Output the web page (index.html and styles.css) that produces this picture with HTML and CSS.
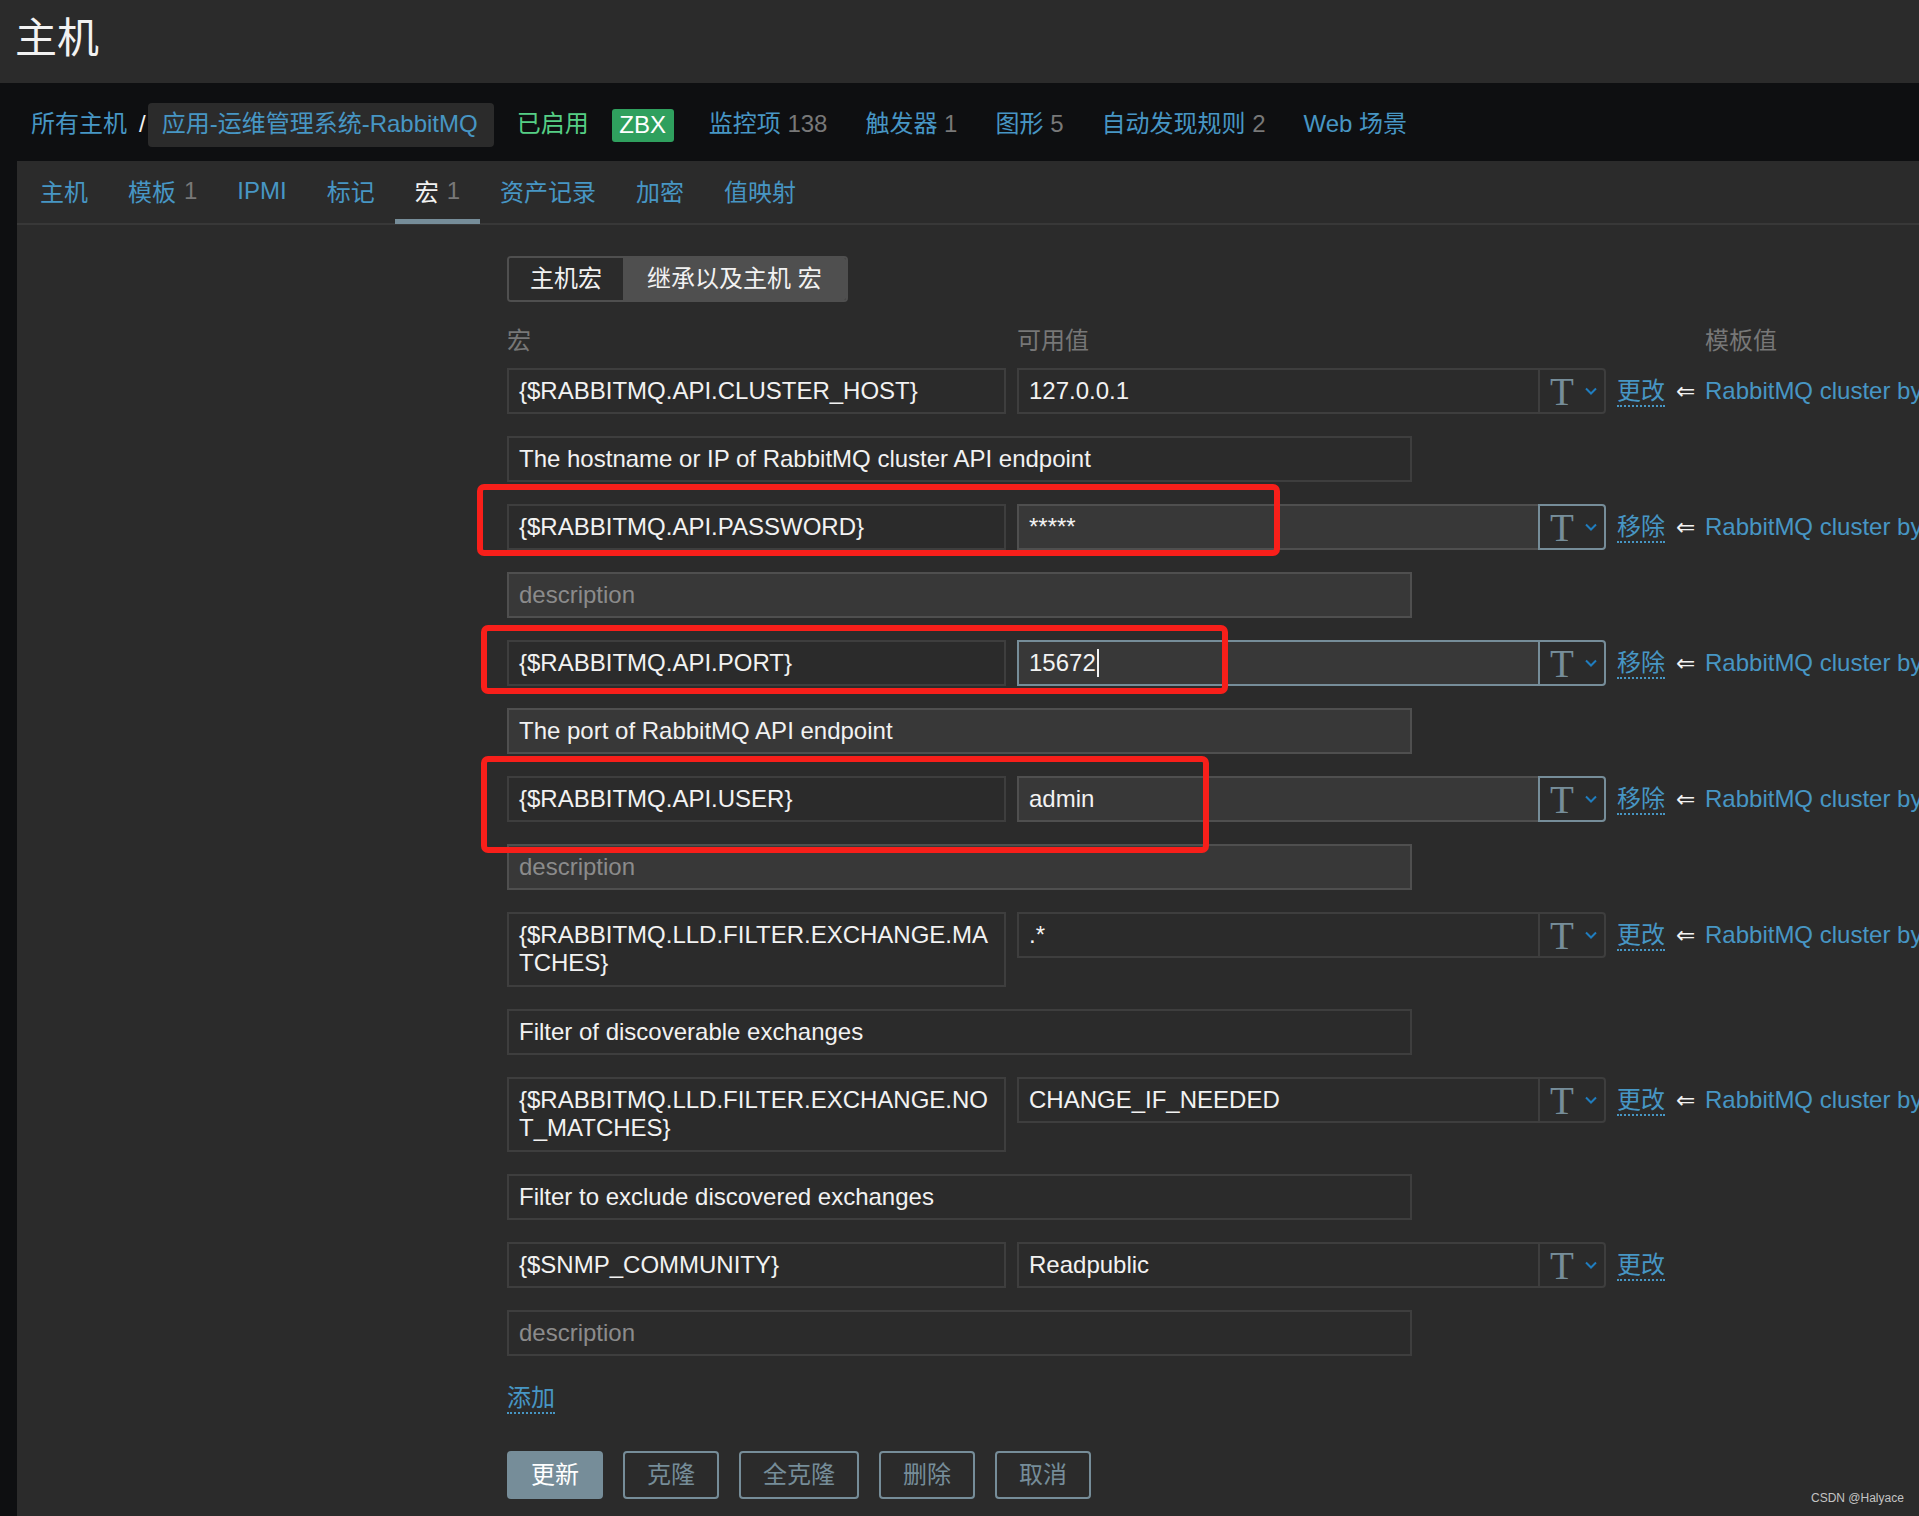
FILE: index.html
```html
<!DOCTYPE html>
<html lang="zh-CN">
<head>
<meta charset="utf-8">
<title>主机</title>
<link rel="stylesheet" href="styles.css">
</head>
<body>
<div class="page">
  <header class="page-header"><h1>主机</h1></header>

  <nav class="host-nav">
    <a class="link nav-text">所有主机</a>
    <span class="sep nav-text">/</span>
    <span class="crumb"><a class="link">应用-运维管理系统-RabbitMQ</a></span>
    <span class="status nav-text">已启用</span>
    <span class="badge">ZBX</span>
    <a class="link item first nav-text">监控项 <span class="count">138</span></a>
    <a class="link item nav-text">触发器 <span class="count">1</span></a>
    <a class="link item nav-text">图形 <span class="count">5</span></a>
    <a class="link item nav-text">自动发现规则 <span class="count">2</span></a>
    <a class="link item nav-text">Web 场景</a>
  </nav>

  <div class="main">
    <ul class="tabs">
      <li class="tab">主机</li>
      <li class="tab">模板 <span class="count">1</span></li>
      <li class="tab">IPMI</li>
      <li class="tab">标记</li>
      <li class="tab active">宏 <span class="count">1</span></li>
      <li class="tab">资产记录</li>
      <li class="tab">加密</li>
      <li class="tab">值映射</li>
    </ul>

    <form class="macros">
      <div class="radio">
        <span class="radio-opt">主机宏</span>
        <span class="radio-opt selected">继承以及主机 宏</span>
      </div>

      <div class="col-heads">
        <span>宏</span>
        <span>可用值</span>
        <span></span>
        <span></span>
        <span>模板值</span>
      </div>

      <div class="entry">
        <div class="macro-line">
          <div class="field ro">{$RABBITMQ.API.CLUSTER_HOST}</div>
          <div class="value-group">
            <div class="field ro value">127.0.0.1</div>
            <div class="type-btn"><span class="t">T</span><svg width="12" height="8" viewBox="0 0 12 8"><path d="M1 1.5 L6 6.5 L11 1.5" fill="none" stroke="#1f7dbf" stroke-width="2"/></svg></div>
          </div>
          <a class="act">更改</a>
          <span class="arrow">⇐</span>
          <a class="tpl">RabbitMQ cluster by HTTP</a>
        </div>
        <div class="field ro desc">The hostname or IP of RabbitMQ cluster API endpoint</div>
      </div>

      <div class="entry">
        <div class="macro-line">
          <div class="field ro">{$RABBITMQ.API.PASSWORD}</div>
          <div class="value-group">
            <div class="field ed value">*****</div>
            <div class="type-btn hl"><span class="t">T</span><svg width="12" height="8" viewBox="0 0 12 8"><path d="M1 1.5 L6 6.5 L11 1.5" fill="none" stroke="#1f7dbf" stroke-width="2"/></svg></div>
          </div>
          <a class="act">移除</a>
          <span class="arrow">⇐</span>
          <a class="tpl">RabbitMQ cluster by HTTP</a>
        </div>
        <div class="field ed desc placeholder">description</div>
      </div>

      <div class="entry">
        <div class="macro-line">
          <div class="field ro">{$RABBITMQ.API.PORT}</div>
          <div class="value-group">
            <div class="field ed focus value">15672<span class="caret"></span></div>
            <div class="type-btn hl"><span class="t">T</span><svg width="12" height="8" viewBox="0 0 12 8"><path d="M1 1.5 L6 6.5 L11 1.5" fill="none" stroke="#1f7dbf" stroke-width="2"/></svg></div>
          </div>
          <a class="act">移除</a>
          <span class="arrow">⇐</span>
          <a class="tpl">RabbitMQ cluster by HTTP</a>
        </div>
        <div class="field ed desc">The port of RabbitMQ API endpoint</div>
      </div>

      <div class="entry">
        <div class="macro-line">
          <div class="field ro">{$RABBITMQ.API.USER}</div>
          <div class="value-group">
            <div class="field ed value">admin</div>
            <div class="type-btn hl"><span class="t">T</span><svg width="12" height="8" viewBox="0 0 12 8"><path d="M1 1.5 L6 6.5 L11 1.5" fill="none" stroke="#1f7dbf" stroke-width="2"/></svg></div>
          </div>
          <a class="act">移除</a>
          <span class="arrow">⇐</span>
          <a class="tpl">RabbitMQ cluster by HTTP</a>
        </div>
        <div class="field ed desc placeholder">description</div>
      </div>

      <div class="entry">
        <div class="macro-line">
          <div class="field ro wrap">{$RABBITMQ.LLD.FILTER.EXCHANGE.MATCHES}</div>
          <div class="value-group">
            <div class="field ro value">.*</div>
            <div class="type-btn"><span class="t">T</span><svg width="12" height="8" viewBox="0 0 12 8"><path d="M1 1.5 L6 6.5 L11 1.5" fill="none" stroke="#1f7dbf" stroke-width="2"/></svg></div>
          </div>
          <a class="act">更改</a>
          <span class="arrow">⇐</span>
          <a class="tpl">RabbitMQ cluster by HTTP</a>
        </div>
        <div class="field ro desc">Filter of discoverable exchanges</div>
      </div>

      <div class="entry">
        <div class="macro-line">
          <div class="field ro wrap">{$RABBITMQ.LLD.FILTER.EXCHANGE.NOT_MATCHES}</div>
          <div class="value-group">
            <div class="field ro value">CHANGE_IF_NEEDED</div>
            <div class="type-btn"><span class="t">T</span><svg width="12" height="8" viewBox="0 0 12 8"><path d="M1 1.5 L6 6.5 L11 1.5" fill="none" stroke="#1f7dbf" stroke-width="2"/></svg></div>
          </div>
          <a class="act">更改</a>
          <span class="arrow">⇐</span>
          <a class="tpl">RabbitMQ cluster by HTTP</a>
        </div>
        <div class="field ro desc">Filter to exclude discovered exchanges</div>
      </div>

      <div class="entry">
        <div class="macro-line">
          <div class="field ro">{$SNMP_COMMUNITY}</div>
          <div class="value-group">
            <div class="field ro value">Readpublic</div>
            <div class="type-btn"><span class="t">T</span><svg width="12" height="8" viewBox="0 0 12 8"><path d="M1 1.5 L6 6.5 L11 1.5" fill="none" stroke="#1f7dbf" stroke-width="2"/></svg></div>
          </div>
          <a class="act">更改</a>
        </div>
        <div class="field ro desc placeholder">description</div>
      </div>

      <a class="add-link">添加</a>

      <div class="buttons">
        <button type="button" class="btn primary">更新</button>
        <button type="button" class="btn">克隆</button>
        <button type="button" class="btn">全克隆</button>
        <button type="button" class="btn">删除</button>
        <button type="button" class="btn">取消</button>
      </div>
    </form>
  </div>

  <div class="mark mark-1"></div>
  <div class="mark mark-2"></div>
  <div class="mark mark-3"></div>
  <div class="watermark">CSDN @Halyace</div>
</div>
</body>
</html>
```

FILE: styles.css
```css
* {
  box-sizing: border-box;
}

html,
body {
  margin: 0;
  padding: 0;
  width: 1919px;
  height: 1516px;
  overflow: hidden;
  background: #0e0f11;
}

body {
  font-family: "Liberation Sans", "Noto Sans CJK SC", sans-serif;
  font-size: 24px;
  color: #f2f2f2;
}

.page {
  position: relative;
  width: 1919px;
  height: 1516px;
}

a {
  text-decoration: none;
  cursor: pointer;
}

.link {
  color: #4796c4;
}

.count {
  color: #787878;
}

/* header */
.page-header {
  height: 83px;
  background: #2b2b2b;
  display: flex;
  align-items: center;
  padding: 0 0 6px 15px;
}

.page-header h1 {
  margin: 0;
  font-size: 42px;
  font-weight: normal;
  line-height: 50px;
  color: #f2f2f2;
}

/* host navigation */
.host-nav {
  height: 78px;
  background: #0e0f11;
  display: flex;
  align-items: center;
  padding: 6px 0 0 31px;
  white-space: nowrap;
}

.nav-text {
  line-height: 28px;
  padding-bottom: 2px;
}

.sep {
  margin: 0 2px 0 12px;
  color: #f2f2f2;
}

.crumb {
  height: 44px;
  line-height: 42px;
  padding: 0 16px 2px 14px;
  background: #2b2b2b;
  border-radius: 4px;
}

.status {
  margin-left: 23px;
  color: #56cf85;
}

.badge {
  margin-left: 23px;
  width: 62px;
  height: 33px;
  line-height: 31px;
  padding-bottom: 2px;
  text-align: center;
  background: #2fa05e;
  color: #ffffff;
  border-radius: 3px;
}

.item {
  margin-left: 38px;
}

.item.first {
  margin-left: 35px;
}

/* main area */
.main {
  margin-left: 17px;
  background: #2b2b2b;
  height: 1355px;
}

.tabs {
  list-style: none;
  margin: 0;
  padding: 0 0 0 3px;
  height: 64px;
  display: flex;
  align-items: flex-start;
  border-bottom: 2px solid #383838;
}

.tab {
  height: 63px;
  padding: 0 20px 4px;
  display: flex;
  align-items: center;
  gap: 8px;
  color: #4796c4;
  white-space: nowrap;
}

.tab.active {
  color: #f2f2f2;
  box-shadow: inset 0 -5px 0 #768d99;
}

.tab.active .count {
  color: #787878;
}

/* macro form */
.macros {
  padding: 31px 0 0 490px;
}

.radio {
  display: inline-flex;
  height: 46px;
  border: 2px solid #4f4f4f;
  border-radius: 4px;
  overflow: hidden;
}

.radio-opt {
  line-height: 42px;
  padding: 0 21px;
  background: #2b2b2b;
  color: #f2f2f2;
}

.radio-opt.selected {
  background: #4f4f4f;
  padding: 0 24px;
}

.col-heads,
.macro-line {
  display: grid;
  grid-template-columns: 499px 589px 48px 18px 1fr;
  column-gap: 11px;
  align-items: start;
}

.col-heads {
  margin-top: 25px;
  margin-bottom: 13px;
  line-height: 28px;
  color: #777777;
}

.entry {
  margin-bottom: 22px;
}

.field {
  min-height: 46px;
  padding: 7px 10px;
  line-height: 28px;
  border: 2px solid #3e3e3e;
  background: #2b2b2b;
  color: #f2f2f2;
  white-space: nowrap;
  overflow: hidden;
}

.field.ed {
  background: #383838;
  border-color: #4f4f4f;
}

.field.focus {
  border-color: #768d99;
}

.field.wrap {
  white-space: normal;
  word-break: break-all;
  padding-bottom: 8px;
}

.placeholder {
  color: #8b8b8b;
}

.caret {
  display: inline-block;
  width: 2px;
  height: 28px;
  margin-left: 1px;
  vertical-align: top;
  background: #f2f2f2;
}

.desc {
  width: 905px;
  margin-top: 22px;
}

.value-group {
  display: flex;
  height: 46px;
}

.value-group .value {
  flex: 1;
  border-right: 0;
}

.type-btn {
  width: 68px;
  height: 46px;
  flex: none;
  display: flex;
  align-items: center;
  padding-left: 10px;
  border: 2px solid #3e3e3e;
  border-radius: 0 4px 4px 0;
  background: #2b2b2b;
}

.type-btn.hl {
  border-color: #768d99;
}

.type-btn .t {
  font-family: "Liberation Serif", serif;
  font-size: 39px;
  line-height: 1;
  color: #768d99;
}

.type-btn svg {
  margin-left: 11px;
  display: block;
}

.act,
.arrow,
.tpl {
  margin-top: 9px;
  line-height: 28px;
  white-space: nowrap;
}

.act {
  justify-self: start;
  color: #4796c4;
  border-bottom: 2px dotted #4796c4;
}

.arrow {
  font-family: "DejaVu Sans", sans-serif;
  font-size: 23px;
  color: #f2f2f2;
}

.tpl {
  color: #4796c4;
}

.add-link {
  display: inline-block;
  margin-top: 6px;
  line-height: 28px;
  color: #4796c4;
  border-bottom: 2px dotted #4796c4;
}

.buttons {
  display: flex;
  gap: 20px;
  margin-top: 37px;
}

.btn {
  height: 48px;
  padding: 0 22px;
  font-family: inherit;
  font-size: 24px;
  line-height: 44px;
  border: 2px solid #768d99;
  border-radius: 4px;
  background: transparent;
  color: #768d99;
}

.btn.primary {
  background: #768d99;
  color: #ffffff;
}

/* red annotation frames drawn over the screenshot */
.mark {
  position: absolute;
  border: 6px solid #f81f1a;
  border-radius: 7px;
}

.mark-1 {
  left: 477px;
  top: 484px;
  width: 803px;
  height: 72px;
}

.mark-2 {
  left: 481px;
  top: 625px;
  width: 747px;
  height: 69px;
}

.mark-3 {
  left: 481px;
  top: 756px;
  width: 728px;
  height: 97px;
}

.watermark {
  position: absolute;
  left: 1811px;
  top: 1491px;
  font-size: 12px;
  line-height: 14px;
  color: #c4c4c4;
}
```
